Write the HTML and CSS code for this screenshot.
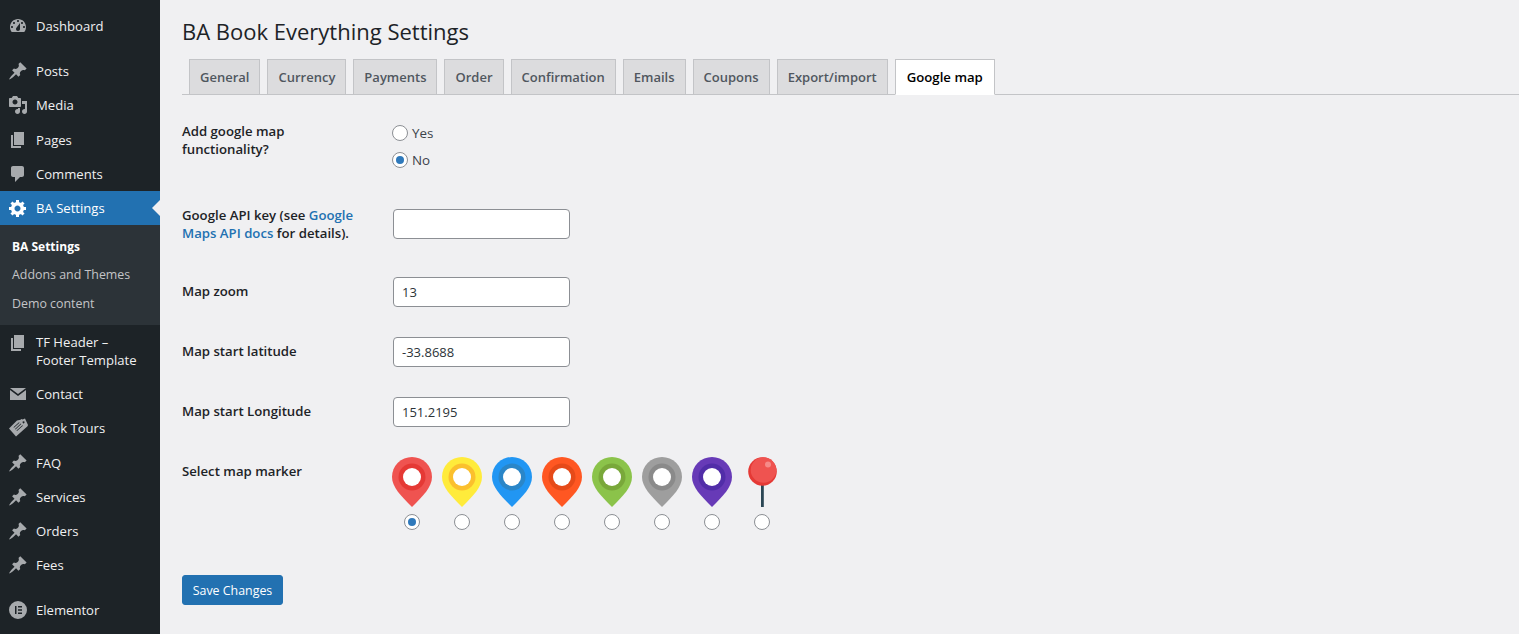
FILE: index.html
```html
<!DOCTYPE html>
<html lang="en">
<head>
<meta charset="utf-8">
<title>BA Book Everything Settings</title>
<link rel="stylesheet" href="styles.css">
</head>
<body>
<svg class="defs" width="0" height="0" aria-hidden="true">
  <symbol id="i-dash" viewBox="0 0 20 20"><path fill-rule="evenodd" d="M3.76 16h12.48c1.1-1.37 1.76-3.11 1.76-5 0-4.42-3.58-8-8-8s-8 3.58-8 8c0 1.89.66 3.63 1.76 5zM10 4c.55 0 1 .45 1 1s-.45 1-1 1-1-.45-1-1 .45-1 1-1zM6 6c.55 0 1 .45 1 1s-.45 1-1 1-1-.45-1-1 .45-1 1-1zm8 0c.55 0 1 .45 1 1s-.45 1-1 1-1-.45-1-1 .45-1 1-1zm-5.37 5.55L12 7v6c0 1.1-.9 2-2 2s-2-.9-2-2c0-.57.24-1.08.63-1.45zM4 10c.55 0 1 .45 1 1s-.45 1-1 1-1-.45-1-1 .45-1 1-1zm12 0c.55 0 1 .45 1 1s-.45 1-1 1-1-.45-1-1 .45-1 1-1z"/></symbol>
  <symbol id="i-pin" viewBox="0 0 20 20"><path d="M10.44 3.02l1.82-1.82 6.36 6.35-1.83 1.82c-1.05-.68-2.48-.57-3.41.36l-.75.75c-.92.93-1.04 2.35-.35 3.41l-1.83 1.82-2.41-2.41-2.8 2.79c-.42.42-3.38 2.71-3.8 2.29s1.86-3.39 2.28-3.81l2.79-2.79L4.1 9.36l1.83-1.82c1.05.69 2.48.57 3.4-.36l.75-.75c.93-.92 1.05-2.35.36-3.41z"/></symbol>
  <symbol id="i-media" viewBox="0 0 20 20"><path fill-rule="evenodd" d="M13 11V4c0-.55-.45-1-1-1h-1.67L9 1H5L3.67 3H2c-.55 0-1 .45-1 1v7c0 .55.45 1 1 1h10c.55 0 1-.45 1-1zM7 4.5c1.38 0 2.5 1.12 2.5 2.5S8.38 9.5 7 9.5 4.5 8.38 4.5 7 5.62 4.5 7 4.5zM14 6h5v10.5c0 1.38-1.12 2.5-2.5 2.5S14 17.88 14 16.5s1.12-2.5 2.5-2.5c.17 0 .34.02.5.05V9h-3V6zm-4 8.05V13h2v3.5c0 1.38-1.12 2.5-2.5 2.5S7 17.88 7 16.5 8.12 14 9.5 14c.17 0 .34.02.5.05z"/></symbol>
  <symbol id="i-pages" viewBox="0 0 20 20"><path d="M6 15V2h10v13H6zm-1 1h8v2H3V5h2v11z"/></symbol>
  <symbol id="i-comment" viewBox="0 0 20 20"><path d="M5 2h9c1.1 0 2 .9 2 2v7c0 1.1-.9 2-2 2h-2l-5 5v-5H5c-1.1 0-2-.9-2-2V4c0-1.1.9-2 2-2z"/></symbol>
  <symbol id="i-gear" viewBox="0 0 20 20"><path fill-rule="evenodd" d="M18 12h-2.18c-.17.7-.44 1.35-.81 1.93l1.54 1.54-2.1 2.1-1.54-1.54c-.58.36-1.23.63-1.91.79V19H8v-2.18c-.68-.16-1.33-.43-1.91-.79l-1.54 1.54-2.12-2.12 1.54-1.54c-.36-.58-.63-1.23-.79-1.91H1V9.03h2.17c.16-.7.44-1.35.8-1.94L2.43 5.55l2.1-2.1 1.54 1.54c.58-.37 1.24-.64 1.93-.81V2h3v2.18c.68.16 1.33.43 1.91.79l1.54-1.54 2.12 2.12-1.54 1.54c.36.59.64 1.24.8 1.94H18V12zm-8.5 1.5c1.66 0 3-1.34 3-3s-1.34-3-3-3-3 1.34-3 3 1.34 3 3 3z"/></symbol>
  <symbol id="i-mail" viewBox="0 0 20 20"><path d="M2 4h16l-8 6zM2 6l8 6 8-6v10H2z"/></symbol>
  <symbol id="i-ticket" viewBox="0 0 20 20"><path fill-rule="evenodd" d="M1 10.500L9 2.500l3.500-.8L13.500 1l1.200.6L17 .5l3 6.500-.5 1.200L8 18.500zM11 4.200L5.500 9.200l.5.5 5.500-5zM12.800 5.600L7 10.900l.5.5 5.800-5.300zM14.400 7.200L8.500 12.600l.5.5 5.900-5.400zM15.500 3.300a1 1 0 1 0 .1 0z"/></symbol>
  <symbol id="i-elementor" viewBox="0 0 20 20"><path fill-rule="evenodd" d="M10 1a9 9 0 1 0 0 18 9 9 0 0 0 0-18zM7 6h1.500v8H7zM10 6h4v1.500h-4zM10 9.250h4v1.500h-4zM10 12.500h4V14h-4z"/></symbol>
  <symbol id="m-pin" viewBox="0 0 40 50"><path d="M20 0a20 20 0 0 1 20 20c0 10-9 19-20 30C9 39 0 30 0 20A20 20 0 0 1 20 0z"/></symbol>
</svg>

<div class="layout">
  <nav class="sidebar">
    <ul class="menu">
      <li class="item"><svg class="icon"><use href="#i-dash"/></svg><span>Dashboard</span></li>
      <li class="sep"></li>
      <li class="item"><svg class="icon"><use href="#i-pin"/></svg><span>Posts</span></li>
      <li class="item"><svg class="icon"><use href="#i-media"/></svg><span>Media</span></li>
      <li class="item"><svg class="icon"><use href="#i-pages"/></svg><span>Pages</span></li>
      <li class="item"><svg class="icon"><use href="#i-comment"/></svg><span>Comments</span></li>
      <li class="item current"><svg class="icon"><use href="#i-gear"/></svg><span>BA Settings</span></li>
      <li class="submenu">
        <a class="sub-link sub-active">BA Settings</a>
        <a class="sub-link">Addons and Themes</a>
        <a class="sub-link">Demo content</a>
      </li>
      <li class="item tall"><svg class="icon"><use href="#i-pages"/></svg><span>TF Header –<br>Footer Template</span></li>
      <li class="item"><svg class="icon"><use href="#i-mail"/></svg><span>Contact</span></li>
      <li class="item"><svg class="icon"><use href="#i-ticket"/></svg><span>Book Tours</span></li>
      <li class="item"><svg class="icon"><use href="#i-pin"/></svg><span>FAQ</span></li>
      <li class="item"><svg class="icon"><use href="#i-pin"/></svg><span>Services</span></li>
      <li class="item"><svg class="icon"><use href="#i-pin"/></svg><span>Orders</span></li>
      <li class="item"><svg class="icon"><use href="#i-pin"/></svg><span>Fees</span></li>
      <li class="sep"></li>
      <li class="item"><svg class="icon"><use href="#i-elementor"/></svg><span>Elementor</span></li>
    </ul>
  </nav>

  <main class="content">
    <h1 class="title">BA Book Everything Settings</h1>
    <div class="tabs">
      <a class="tab">General</a>
      <a class="tab">Currency</a>
      <a class="tab">Payments</a>
      <a class="tab">Order</a>
      <a class="tab">Confirmation</a>
      <a class="tab">Emails</a>
      <a class="tab">Coupons</a>
      <a class="tab">Export/import</a>
      <a class="tab tab-active">Google map</a>
    </div>

    <form class="form">
      <div class="row row-func">
        <div class="label">Add google map<br>functionality?</div>
        <div class="field choices">
          <label class="choice"><input class="radio" type="radio" name="func"><span>Yes</span></label>
          <label class="choice"><input class="radio" type="radio" name="func" checked><span>No</span></label>
        </div>
      </div>
      <div class="row row-key">
        <div class="label">Google API key (see <a class="link">Google</a><br><a class="link">Maps API docs</a> for details).</div>
        <div class="field field-key"><input class="text" type="text"></div>
      </div>
      <div class="row row-plain">
        <div class="label">Map zoom</div>
        <div class="field"><input class="text" type="text" value="13"></div>
      </div>
      <div class="row row-plain">
        <div class="label">Map start latitude</div>
        <div class="field"><input class="text" type="text" value="-33.8688"></div>
      </div>
      <div class="row row-plain">
        <div class="label">Map start Longitude</div>
        <div class="field"><input class="text" type="text" value="151.2195"></div>
      </div>
      <div class="row row-markers">
        <div class="label">Select map marker</div>
        <div class="field markers">
          <label class="marker"><svg class="pin" viewBox="0 0 40 50"><use href="#m-pin" fill="#ef5350"/><circle cx="20" cy="20" r="13.500" fill="#e53935"/><circle cx="20" cy="20" r="9" fill="#fff"/></svg><input class="radio" type="radio" name="marker" checked></label>
          <label class="marker"><svg class="pin" viewBox="0 0 40 50"><use href="#m-pin" fill="#ffeb3b"/><circle cx="20" cy="20" r="13.500" fill="#fbc02d"/><circle cx="20" cy="20" r="9" fill="#fff"/></svg><input class="radio" type="radio" name="marker"></label>
          <label class="marker"><svg class="pin" viewBox="0 0 40 50"><use href="#m-pin" fill="#2196f3"/><circle cx="20" cy="20" r="13.500" fill="#2a86c8"/><circle cx="20" cy="20" r="9" fill="#fff"/></svg><input class="radio" type="radio" name="marker"></label>
          <label class="marker"><svg class="pin" viewBox="0 0 40 50"><use href="#m-pin" fill="#ff5722"/><circle cx="20" cy="20" r="13.500" fill="#e64a19"/><circle cx="20" cy="20" r="9" fill="#fff"/></svg><input class="radio" type="radio" name="marker"></label>
          <label class="marker"><svg class="pin" viewBox="0 0 40 50"><use href="#m-pin" fill="#8bc34a"/><circle cx="20" cy="20" r="13.500" fill="#79a83a"/><circle cx="20" cy="20" r="9" fill="#fff"/></svg><input class="radio" type="radio" name="marker"></label>
          <label class="marker"><svg class="pin" viewBox="0 0 40 50"><use href="#m-pin" fill="#9e9e9e"/><circle cx="20" cy="20" r="13.500" fill="#8a8a8a"/><circle cx="20" cy="20" r="9" fill="#fff"/></svg><input class="radio" type="radio" name="marker"></label>
          <label class="marker"><svg class="pin" viewBox="0 0 40 50"><use href="#m-pin" fill="#673ab7"/><circle cx="20" cy="20" r="13.500" fill="#512da8"/><circle cx="20" cy="20" r="9" fill="#fff"/></svg><input class="radio" type="radio" name="marker"></label>
          <label class="marker"><svg class="pin" viewBox="0 0 40 50"><rect x="19" y="26" width="2.800" height="24" fill="#2b4654"/><circle cx="20.500" cy="14.500" r="14.300" fill="#e53935"/><circle cx="21.500" cy="13" r="12.800" fill="#ef5350"/><circle cx="26" cy="7.500" r="3" fill="#f58a88"/></svg><input class="radio" type="radio" name="marker"></label>
        </div>
      </div>
      <button class="save" type="button">Save Changes</button>
    </form>
  </main>
</div>
</body>
</html>
```
FILE: styles.css
```css
* { box-sizing: border-box; }
html, body { margin: 0; height: 100%; }
body {
  background: #f0f0f2;
  color: #1d2327;
  font-family: "Open Sans", "Noto Sans", "Liberation Sans", sans-serif;
  font-size: 13px;
  overflow: hidden;
}
.defs { display: block; height: 0; }
.layout { display: flex; height: 634px; overflow: hidden; }

/* Sidebar */
.sidebar { width: 160px; flex: none; background: #1d2327; color: #f0f0f1; padding-top: 9px; }
.menu { list-style: none; margin: 0; padding: 0; }
.item { position: relative; display: flex; align-items: center; height: 34.2px; padding-left: 8px; font-size: 13.1px; line-height: 18px; }
.item span { margin-left: 8px; }
.item.tall { height: 52px; align-items: flex-start; padding-top: 8px; }
.icon { width: 20px; height: 20px; flex: none; fill: #a7aaad; }
.sep { height: 11px; }
.current { background: #2271b1; color: #fff; }
.current .icon { fill: #fff; }
.current::after {
  content: "";
  position: absolute;
  right: 0;
  top: 50%;
  margin-top: -8px;
  border: 8px solid transparent;
  border-right-color: #f0f0f2;
  border-left-width: 0;
}
.submenu { display: flex; flex-direction: column; background: #2c3338; height: 100px; padding-top: 7.6px; }
.sub-link { display: block; height: 28.5px; line-height: 28px; padding-left: 12px; font-size: 12.4px; color: #c3c4c7; }
.sub-active { color: #fff; font-weight: 700; font-size: 12px; }

/* Content */
.content { flex: 1; padding: 0 0 0 22px; }
.title { margin: 0; padding-top: 17px; height: 59px; font-size: 22px; line-height: 28px; font-weight: 400; color: #1d2327; }
.tabs { display: flex; gap: 7px; padding-left: 7px; height: 36px; border-bottom: 1px solid #c3c4c7; }
.tab {
  height: 36px;
  padding: 0 10px;
  line-height: 34px;
  font-size: 13px;
  font-weight: 600;
  color: #50575e;
  background: #dcdcde;
  border: 1px solid #c3c4c7;
  white-space: nowrap;
}
.tab-active { padding: 0 11px; font-size: 13.2px; background: #fff; color: #000; border-bottom-color: #fff; }

/* Form */
.form { display: block; }
.row { display: flex; }
.label { width: 211px; flex: none; font-size: 13.2px; line-height: 18px; font-weight: 600; color: #1d2327; }
.link { color: #2271b1; }
.row-func { padding-top: 27px; height: 111px; }
.row-key { height: 71px; }
.field-key { padding-top: 3px; }
.row-plain { height: 60px; }
.row-plain .label { padding-top: 5px; }
.row-markers { height: 118px; }
.row-markers .label { padding-top: 5px; }
.choices { display: flex; flex-direction: column; gap: 9px; padding-top: 2px; margin-left: -1px; }
.choice { display: flex; align-items: center; gap: 4px; height: 18px; font-size: 13.4px; color: #3c434a; }
.radio {
  appearance: none;
  margin: 0;
  width: 16px;
  height: 16px;
  flex: none;
  border: 1px solid #8c8f94;
  border-radius: 50%;
  background: #fff;
  display: inline-grid;
  place-content: center;
}
.radio:checked::before { content: ""; width: 8px; height: 8px; border-radius: 50%; background: #2f79bb; }
.text {
  display: block;
  width: 177px;
  height: 30px;
  padding: 0 8px;
  font: 13px "Open Sans", "Noto Sans", sans-serif;
  color: #2c3338;
  background: #fff;
  border: 1px solid #8c8f94;
  border-radius: 4px;
}
.markers { display: flex; margin-left: -1px; }
.marker { display: flex; flex-direction: column; align-items: center; gap: 7px; width: 40px; margin-right: 10px; }
.pin { display: block; width: 40px; height: 50px; }
.save {
  display: block;
  width: 101px;
  height: 30px;
  padding: 0;
  font: 12.4px "Open Sans", "Noto Sans", sans-serif;
  color: #fff;
  background: #2271b1;
  border: 1px solid #2271b1;
  border-radius: 3px;
}
```
